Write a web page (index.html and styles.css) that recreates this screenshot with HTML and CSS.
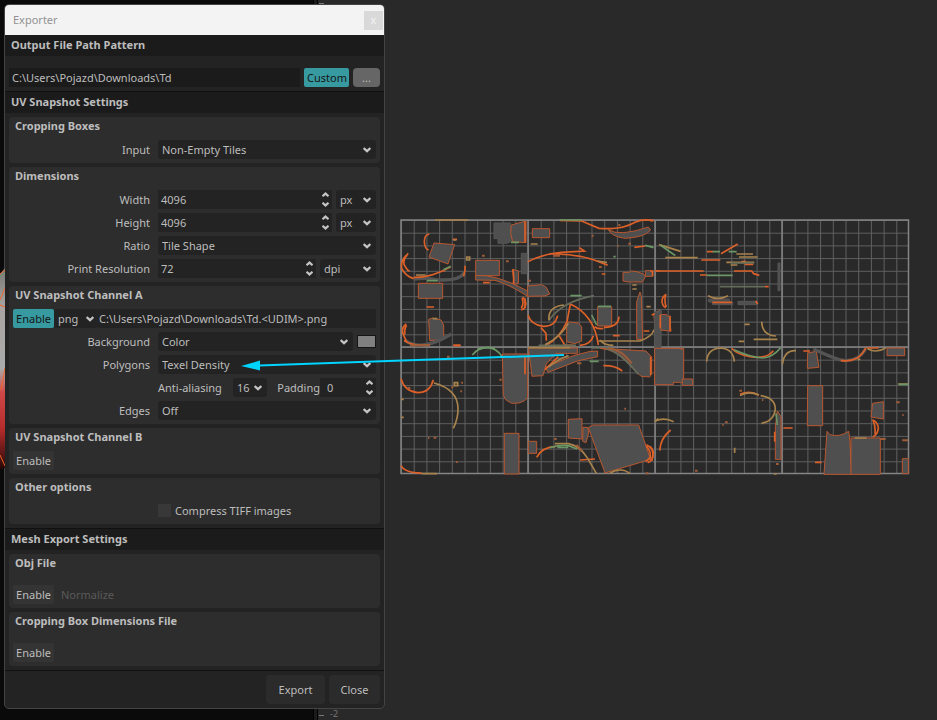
FILE: index.html
```html
<!DOCTYPE html>
<html lang="en">
<head>
<meta charset="utf-8">
<title>Exporter</title>
<link rel="stylesheet" href="styles.css">
</head>
<body>
<svg width="0" height="0" class="defs" aria-hidden="true">
  <defs>
    <symbol id="chev" viewBox="0 0 8 6"><path d="M0.6 1 4 4.2 7.4 1" fill="none" stroke="#c4c4c4" stroke-width="2.300"/></symbol>
    <symbol id="spin" viewBox="0 0 7 15"><path d="M0.5 4.300 3.500 1.600 6.500 4.300M0.500 10.700 3.500 13.400 6.500 10.700" fill="none" stroke="#c4c4c4" stroke-width="2.200"/></symbol>
    <pattern id="minor" x="401" y="220" width="12.7" height="12.7" patternUnits="userSpaceOnUse"><path d="M0 0H12.7M0 0V12.7" stroke="#686868" stroke-width="2" fill="none"/></pattern>
  </defs>
</svg>

<svg class="model" width="5" height="204" viewBox="0 0 5 204" aria-hidden="true">
  <defs><linearGradient id="body" x2="0" y2="1"><stop offset="0" stop-color="#777"/><stop offset=".2" stop-color="#aaa5a3"/><stop offset=".5" stop-color="#aaa"/><stop offset=".62" stop-color="#d04747"/><stop offset=".8" stop-color="#b52c2c"/><stop offset="1" stop-color="#260808"/></linearGradient></defs>
  <path d="M0 6 5 0V200L0 201Z" fill="url(#body)"/>
  <path d="M0 6 5 2M0 32 5 20M0 37 5 39M5 100 1 122M0 187 5 198" stroke="#f06428" fill="none"/>
  <path d="M0 9 5 5" stroke="#6c9a65"/>
</svg>

<form class="dialog">
  <header class="titlebar"><span>Exporter</span><button type="button" class="close" aria-label="Close window">x</button></header>

  <h2 class="first">Output File Path Pattern</h2>
  <div class="pathbar">
    <input type="text" class="text path" aria-label="Output path" value="C:\Users\Pojazd\Downloads\Td">
    <button type="button" class="btn on">Custom</button>
    <button type="button" class="btn browse">...</button>
  </div>

  <h2>UV Snapshot Settings</h2>
  <div class="section">
    <fieldset>
      <legend>Cropping Boxes</legend>
      <div class="row"><label for="input">Input</label><div class="field">
        <span class="select grow"><select id="input"><option>Non-Empty Tiles</option></select><svg class="chev"><use href="#chev"/></svg></span></div></div>
    </fieldset>
    <fieldset>
      <legend>Dimensions</legend>
      <div class="row"><label for="w">Width</label><div class="field">
        <span class="number grow"><input id="w" type="text" value="4096"><svg class="spin"><use href="#spin"/></svg></span>
        <span class="select px"><select aria-label="Width unit"><option>px</option></select><svg class="chev"><use href="#chev"/></svg></span></div></div>
      <div class="row"><label for="h">Height</label><div class="field">
        <span class="number grow"><input id="h" type="text" value="4096"><svg class="spin"><use href="#spin"/></svg></span>
        <span class="select px"><select aria-label="Height unit"><option>px</option></select><svg class="chev"><use href="#chev"/></svg></span></div></div>
      <div class="row"><label for="ratio">Ratio</label><div class="field">
        <span class="select grow"><select id="ratio"><option>Tile Shape</option></select><svg class="chev"><use href="#chev"/></svg></span></div></div>
      <div class="row"><label for="res">Print Resolution</label><div class="field">
        <span class="number grow"><input id="res" type="text" value="72"><svg class="spin"><use href="#spin"/></svg></span>
        <span class="select dpi"><select aria-label="Resolution unit"><option>dpi</option></select><svg class="chev"><use href="#chev"/></svg></span></div></div>
    </fieldset>
    <fieldset>
      <legend>UV Snapshot Channel A</legend>
      <div class="line">
        <button type="button" class="btn on enable">Enable</button>
        <span class="select ext"><select aria-label="File type"><option>png</option></select><svg class="chev"><use href="#chev"/></svg></span>
        <input type="text" class="text file" aria-label="Channel A file" value="C:\Users\Pojazd\Downloads\Td.&lt;UDIM&gt;.png">
      </div>
      <div class="row"><label for="bg">Background</label><div class="field">
        <span class="select grow"><select id="bg"><option>Color</option></select><svg class="chev"><use href="#chev"/></svg></span>
        <button type="button" class="swatch" aria-label="Background color"></button></div></div>
      <div class="row"><label for="poly">Polygons</label><div class="field">
        <span class="select grow"><select id="poly"><option>Texel Density</option></select><svg class="chev"><use href="#chev"/></svg></span></div></div>
      <div class="row"><span></span><div class="field aa">
        <label for="aa">Anti-aliasing</label>
        <span class="select samples"><select id="aa"><option>16</option></select><svg class="chev"><use href="#chev"/></svg></span>
        <label for="pad" class="padlabel">Padding</label>
        <span class="number pad"><input id="pad" type="text" value="0"><svg class="spin"><use href="#spin"/></svg></span></div></div>
      <div class="row"><label for="edges">Edges</label><div class="field">
        <span class="select grow"><select id="edges"><option>Off</option></select><svg class="chev"><use href="#chev"/></svg></span></div></div>
    </fieldset>
    <fieldset>
      <legend>UV Snapshot Channel B</legend>
      <div class="line"><button type="button" class="btn enable">Enable</button></div>
    </fieldset>
    <fieldset>
      <legend>Other options</legend>
      <div class="row"><span></span><label class="check"><input type="checkbox">Compress TIFF images</label></div>
    </fieldset>
  </div>

  <h2>Mesh Export Settings</h2>
  <div class="section">
    <fieldset>
      <legend>Obj File</legend>
      <div class="line low"><button type="button" class="btn enable">Enable</button><button type="button" class="btn ghost" disabled>Normalize</button></div>
    </fieldset>
    <fieldset>
      <legend>Cropping Box Dimensions File</legend>
      <div class="line low"><button type="button" class="btn enable">Enable</button></div>
    </fieldset>
  </div>

  <footer><button type="button" class="action export">Export</button><button type="button" class="action">Close</button></footer>
</form>

<main class="viewport">
<svg class="uv" viewBox="395 215 520 265" role="img" aria-label="UV tiles">
  <rect x="401" y="220" width="508" height="254" fill="url(#minor)" opacity=".85"/>
  <path d="M401 220H908.500V473.500H401ZM528 220V474M655 220V474M782 220V474M401 347H909" fill="none" stroke="#858585" stroke-width="1.500"/>

  <g transform="translate(395 215) scale(.33333)" class="art">
    <g class="s"><path d="M297 24H347V42L349 79 335 85H309V71H297Z" class="p"/><path d="M349 30 393 18V83L353 80 347 55Z"/><path d="M117 84 179 89 159 147 102 126Z"/><path d="M242 136H313V182H242Z"/><path d="M70 205H143V250H70Z"/><path d="M101 313 113 309 138 315 146 330V365L138 374 104 377Z"/><path d="M379 115H396V176H379Z" class="p"/><path d="M353 163 371 168 370 205 357 208Z"/><path d="M242 182Q300 175 398 228V244Q340 207 300 196L242 195Z"/></g>
    <path class="g6" d="M56 192Q105 187 120 194 192 200 208 173M30 376Q80 412 169 357"/>
    <path class="o" d="M103 57Q88 59 88 80 89 101 101 105M40 115Q16 135 20 160 31 183 56 191M37 120Q25 130 27 148 35 165 44 169M56 187Q110 188 167 155M210 152V165L206 184M34 327Q18 338 24 356L35 381M35 331Q27 340 30 358M383 246Q396 258 391 273 388 284 378 284M381 249Q388 265 379 279M353 163Q358 185 355 207M95 276H117M175 391H197M264 203H284M173 73H186"/>
    <path class="o" d="M27 376Q50 394 105 390"/>
    <path class="y" d="M120 15H220M63 180H92M175 75H184M113 311H127M215 126H224V135H215Z"/>
    <path class="n" d="M145 164 167 154M96 197H128M247 403Q273 393 300 401M348 82H372"/>
    <path class="b" d="M261 122H269M333 139H341M144 168H151"/>
  </g>

  <g transform="translate(525 215) scale(.33333)" class="art">
    <g class="s"><path d="M22 41H74V68H22Z"/><path d="M250 44Q283 66 370 36L377 45Q360 67 300 70 260 65 250 44Z"/><path d="M8 213 50 209 64 217 74 237 60 243 8 244Z"/><path d="M294 172H314L319 168 336 170 355 177 362 184 352 201H310L294 198Z"/><path d="M361 167H382V184H361Z"/><path d="M218 275H260V333H218Z"/><path d="M345 231 349 245 353 374 335 373V260Z"/><path d="M125 320 160 324 170 335V378L149 386 125 380Z"/><path d="M386 295 405 285V335H390Z"/></g>
    <path class="o" d="M105 16 170 18 222 40Q290 46 330 22 360 10 383 18M8 140Q60 115 110 112L178 108 163 98M82 117Q170 115 248 151M9 300Q18 330 55 334 90 335 98 302M136 267Q208 300 220 390M136 267 126 320Q103 370 66 389M103 363 120 391 145 391M282 305Q280 337 237 337M209 335Q216 343 235 340M48 338 63 355 64 377M205 362Q198 388 165 391M222 41H262M328 97 360 93M264 362H284M391 168H405M356 348H373M0 20V82M0 250V280M230 177H241"/>
    <path class="g" d="M71 317Q110 260 207 242M41 391H153M200 399H265"/>
    <path class="y" d="M72 315Q68 275 117 270M130 325Q108 365 60 389M220 378H345Q382 365 387 344M225 375Q236 391 265 391M218 138 246 143M17 87H38M322 210H335M322 222H335M364 275H377"/>
    <path class="n" d="M104 15H170M136 242H170M200 300 215 330M219 274H258M360 91 385 97M265 125H272"/>
    <path class="b" d="M8 197H18M280 30H286M200 62H206M310 86H318M277 93H281M222 156H230M85 122H105"/>
  </g>

  <g transform="translate(650 215) scale(.33333)" class="art">
    <g class="s"><path d="M176 252H238V261H248V269H187V261H176Z" class="p"/><path d="M264 259H323V269H264ZM384 144H390V227H384Z" class="p"/><path d="M14 291 34 287 33 397H14Z" class="p"/><path d="M32 299 49 298 53 304 62 303 60 320 63 349 33 345 30 333Z"/></g>
    <path class="o" d="M16 168H161M154 135H211M252 168H305L311 176 328 181M150 180H170M171 110H190M213 116 263 87M49 238Q36 245 36 260 38 275 48 278M47 240Q42 260 49 276M1 16H11M0 168H8V184M187 262H246M317 258 323 267M310 148H284M274 140H288M345 215H356M5 300 14 296M31 300V338M60 305V348"/>
    <path class="y" d="M27 89 92 109M259 117H309M267 126H323M229 142H313M242 150H262M174 242Q204 258 234 242M284 328H299M266 379H282M335 320Q337 361 378 363M311 373H382M46 128H143"/>
    <path class="n" d="M31 90 76 122M170 181H248M188 110H210M236 110H260M0 94 10 98"/>
    <path class="g" d="M210 215H345M242 144H311"/>
  </g>

  <g transform="translate(395 345) scale(.33333)" class="art">
    <g class="s"><path d="M322 27H398V157L389 167 372 174 350 175 332 164 325 151Z"/><path d="M328 265H372V387H328Z"/></g>
    <path class="o" d="M18 101Q28 138 68 143 105 143 115 105L110 116M18 362Q30 384 80 384M175 1H196"/>
    <path class="y" d="M117 114Q188 133 189 190 190 220 175 250M80 386H126M178 113H188V122H178ZM18 217H26M18 163H26"/>
    <path class="n" d="M232 30Q249 8 278 8 306 10 322 36"/>
    <path class="b" d="M156 35H164M199 113H204M169 127H175M196 139H201M313 104H320M183 351H188M99 279H103M116 278H124M37 129H46M45 1H105"/>
  </g>

  <g transform="translate(525 345) scale(.33333)" class="art">
    <g class="s"><path d="M10 9H157V25H93L64 57 54 92 21 94Z"/><path d="M218 18V35L160 47 69 82 61 67 145 32 192 20Z"/><path d="M225 10 363 18 380 36V86L374 96 348 94Q325 72 302 43 272 15 225 10Z"/><path d="M130 223 171 221V282L130 279Z"/><path d="M174 247H188L191 264 183 293 173 289Z"/><path d="M190 248 204 240H341L377 343 240 384Z"/><path d="M10 289H35V325H10Z"/><path d="M390 5H405V121H390Z" class="p"/></g>
    <path class="o" d="M35 337Q50 306 93 304M235 62Q271 61 292 78M364 299Q385 309 385 325 383 348 368 353M364 304Q378 317 376 337L362 350M60 74 100 35M165 345 210 342M0 36V88"/>
    <path class="g" d="M245 11Q285 22 340 88M97 42 132 34"/>
    <path class="y" d="M90 296 130 296Q165 303 188 340L214 385M255 384Q290 365 315 386M390 229 400 221M10 8H135M70 66Q95 45 130 32"/>
    <path class="n" d="M194 49H221M75 308Q110 298 130 302L156 312M97 307H130"/>
    <path class="b" d="M156 55H169M298 191H303M88 282H95M362 385H370M154 300 172 318M250 10Q290 14 320 55"/>
  </g>

  <g transform="translate(650 345) scale(.33333)" class="art">
    <g class="s"><path d="M14 10H101V112H70V119H14Z"/><path d="M97 102H128V121H97Z"/><path d="M473 24 499 19 507 67 472 70Z"/><path d="M711 9H764V32H711Z"/><path d="M473 122H518V242H472Z"/><path d="M668 175 700 170V222L663 216Z"/><path d="M531 259 540 269Q567 278 596 259L600 290 604 388H522Z"/><path d="M603 279H691V388H603Z"/><path d="M757 341H775V386H757Z"/><path d="M382 198 393 215V343H376V245Z"/></g>
    <path class="g6" d="M490 12Q540 35 568 44 620 57 647 12"/>
    <path class="o" d="M29 317Q31 280 62 255M245 10Q260 28 300 35 350 43 370 17M460 18H480M572 46Q600 51 622 39 642 23 647 8M667 224Q684 230 685 250 682 270 668 276M669 226Q677 242 675 267M495 352H515M0 304Q15 320 5 348M374 260V290M400 249H428M270 148Q300 135 327 151M2 35V90M650 9H686"/>
    <path class="y" d="M170 50Q172 10 213 9 250 12 253 50M397 58Q403 15 438 17M14 229Q42 215 71 230M270 152Q293 137 326 149M332 152Q375 158 376 192 372 229 334 235M653 11Q678 26 707 9M614 279H650M254 308V324M744 117H774M372 387H380M623 43H631"/>
    <path class="n" d="M252 14Q300 36 338 39 368 37 392 8M378 205 382 240M747 118H774"/>
    <path class="b" d="M225 232H233M217 240H221M336 165H340M135 377H143M739 172H749M757 210H761M757 286H774M691 282H707M378 357H386M268 137H276M92 12H97"/>
  </g>
</svg>
</main>

<svg class="arrow" width="325" height="20" viewBox="240 351 325 20" aria-hidden="true"><path d="M259 365.500 564 355" stroke="#00d4ff" stroke-width="2"/><path d="M241 366 260 360.500V370.500Z" fill="#00d4ff"/></svg>
<span class="tick top"></span><span class="tick bottom"></span><span class="ruler">-2</span>
</body>
</html>
```
FILE: styles.css
```css
* { box-sizing: border-box; }

body {
  margin: 0;
  min-height: 100vh;
  position: relative;
  overflow: hidden;
  display: flex;
  align-items: flex-start;
  padding: 4px 4px 9px;
  color: #bdbdbd;
  font: 11px/20px "Noto Sans", sans-serif;
  background: linear-gradient(to right, #0a0a0a 313px, #000 313px 314px, #1b1b1b 314px 317px, #000 317px 318px, #292929 318px);
}

button, input, select { font: inherit; color: inherit; margin: 0; border: 0; }
.defs { position: absolute; }

.dialog {
  flex: 0 0 381px;
  border: 1px solid #444;
  border-radius: 5px;
  background: #232323;
  overflow: hidden;
}

.titlebar {
  display: flex;
  justify-content: space-between;
  align-items: center;
  height: 30px;
  padding: 0 1px 0 8px;
  background: #f3f3f3;
  color: #929292;
}
.close { width: 19px; height: 19px; padding: 0; background: #d9d9d9; color: #f3f3f3; line-height: 16px; }

h2 {
  margin: 0;
  padding: 0 6px;
  height: 22px;
  border-top: 1px solid #111;
  background: #1b1b1b;
  font-size: 11px;
  line-height: 20px;
}
h2.first { height: 21px; border: 0; }

.pathbar { display: flex; gap: 4px; padding: 12px 4px 4px; }
.text { flex: 1; min-width: 0; height: 19px; padding: 1px 3px 0; background: #1b1b1b; }
.btn { height: 19px; padding: 1px 3px 0; border-radius: 2px; background: #343434; line-height: 18px; }
.btn.on { background: #379aa0; color: #151515; }
.pathbar .on { width: 45px; }
.btn.browse { width: 27px; border-radius: 4px; background: #666; }
.btn.enable { width: 41px; }
.btn.ghost { background: none; color: #5a5a5a; margin-left: 4px; }

.section { display: flex; flex-direction: column; gap: 4px; padding: 4px; }
fieldset { margin: 0; border: 0; min-width: 0; padding: 0 4px 4px; border-radius: 4px; background: #2d2d2d; }
legend { float: left; width: 100%; height: 19px; padding: 0 2px; font-weight: bold; line-height: 17px; }
legend + div { clear: both; }
.row, .line { display: flex; padding-top: 4px; }
.row > :first-child { flex: 0 0 137px; text-align: right; }
.row { gap: 8px; }
.row label { height: 19px; }
.line.low { padding-top: 12px; }
.field { flex: 1; display: flex; gap: 4px; min-width: 0; }
.grow { flex: 1; }

.select, .number { position: relative; display: flex; height: 19px; background: #232323; }
.select { border-radius: 3px; }
select, .number input { width: 100%; min-width: 0; background: none; appearance: none; height: 19px; }
select { padding: 0 4px 1px; }
.number input { padding: 1px 3px 0; }
.chev { position: absolute; right: 5px; top: 7px; width: 8px; height: 6px; pointer-events: none; }
.spin { position: absolute; right: 3px; top: 2px; width: 7px; height: 15px; pointer-events: none; }
.px { flex: 0 0 40px; }
.dpi { flex: 0 0 56px; }
.ext { flex: 0 0 44px; }
.ext .chev { right: 4px; }
.text.file { background: #232323; padding: 1px 1px 0; }
.swatch { width: 19px; height: 13px; align-self: center; padding: 0; background: #808080; border: 1px solid #151515; }
.field.aa { gap: 0; }
.aa > label:first-child { flex: 0 0 75px; }
.samples { flex: 0 0 34px; }
.padlabel { flex: 1; text-align: right; }
.pad { flex: 0 0 56px; }
.number.pad input { padding: 1px 7px 0; }
.check { display: flex; align-items: center; gap: 4px; }
.check input { appearance: none; width: 13px; height: 13px; background: #383838; }

footer { display: flex; justify-content: flex-end; gap: 4px; padding: 4px; border-top: 1px solid #111; }
.action { width: 51px; height: 29px; padding: 0; border-radius: 4px; background: #2b2b2b; }
.action.export { width: 59px; }

.viewport { flex: 1; min-width: 0; padding: 211px 18px 0 10px; }
.uv { display: block; width: 100%; }
.art path { fill: none; stroke-width: 5; }
.art .s path { fill: #4f4f4f; stroke: #b8562f; stroke-width: 3; }
.art .s path.p { stroke: #555; }
.art .o { stroke: #dc6028; }
.art .y { stroke: #a8834c; }
.art .n { stroke: #6b9665; }
.art .g { stroke: #666c5b; }
.art .b { stroke: #a05c38; stroke-width: 6; }
.art .g6 { stroke: #545454; stroke-width: 10; }

.model { position: absolute; left: 0; top: 268px; }
.arrow { position: absolute; left: 240px; top: 351px; pointer-events: none; }
.tick { position: absolute; left: 319px; width: 5px; height: 1px; background: #777; }
.tick.top { top: 3px; }
.tick.bottom { bottom: 4px; }
.ruler { position: absolute; left: 330px; bottom: 0; color: #777; font-size: 9px; line-height: 12px; }
```
